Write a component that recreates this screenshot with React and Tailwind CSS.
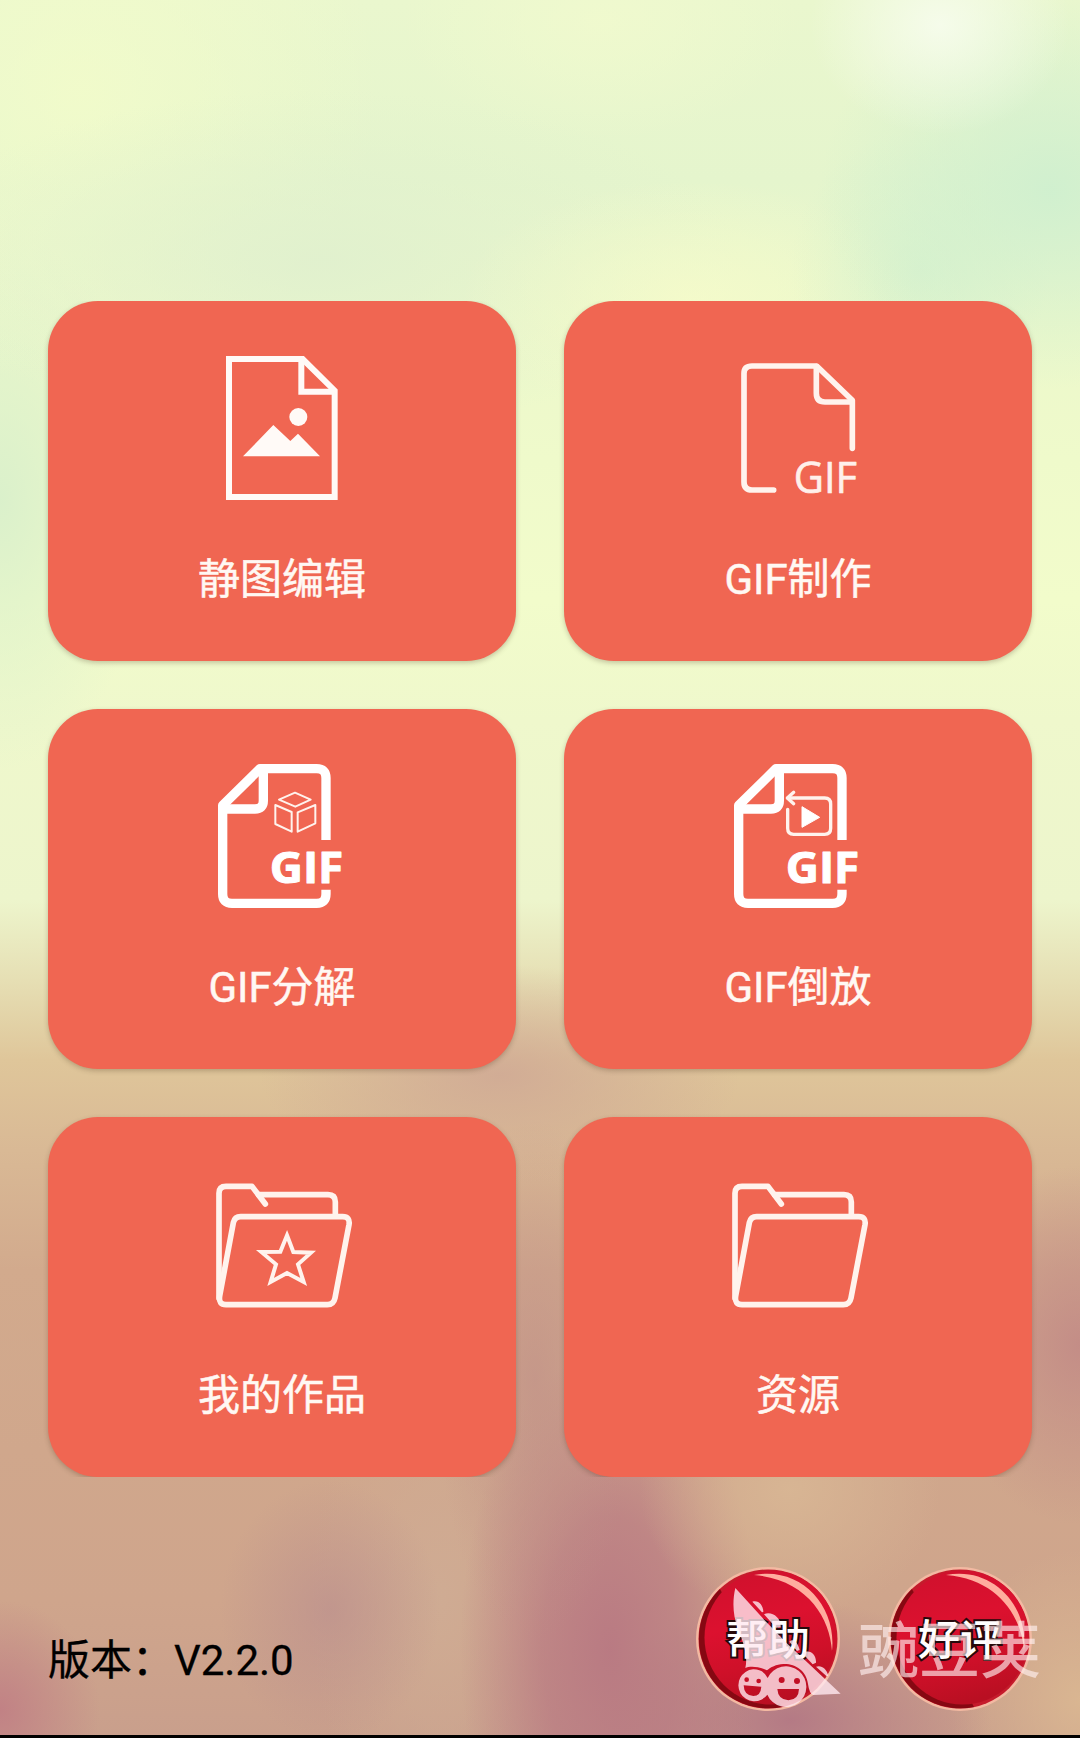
const gifFont = '"Open Sans", "Noto Sans", sans-serif';

function IconFrame({ viewBox, children }) {
  return (
    <svg className="block size-[160px] shrink-0" viewBox={viewBox} fill="none" stroke="#fff3ed" strokeLinejoin="round">
      {children}
    </svg>
  );
}

function PictureFileIcon() {
  return (
    <IconFrame viewBox="66 60 480 480">
      <g stroke="#fffaf7" strokeWidth="18" strokeLinejoin="miter">
        <path d="M147 87H368L464 182V501H147Z" />
        <path d="M364 88V185H464" />
      </g>
      <circle cx="355" cy="261" r="27" fill="#fffaf7" stroke="none" />
      <path d="M189 379L280 285L331 333L354 311L420 379Z" fill="#fffaf7" stroke="none" />
    </IconFrame>
  );
}

function GifFileIcon() {
  return (
    <IconFrame viewBox="54 60 480 480">
      <g strokeWidth="17" strokeLinecap="round">
        <path d="M221 480H156Q132 480 132 456V130Q132 108 156 108H350L457 211V355" />
        <path d="M349 110V190Q349 216 375 216H455" />
      </g>
      <text x="281" y="488" fill="#fff0eb" stroke="#fff0eb" strokeWidth="2" fontSize="132" textLength="190" lengthAdjust="spacingAndGlyphs" style={{ fontFamily: gifFont }}>
        GIF
      </text>
    </IconFrame>
  );
}

function BoldGifPage({ children, viewBox, shift }) {
  return (
    <IconFrame viewBox={viewBox}>
      <g transform={shift} stroke="#ffffff">
        <g strokeWidth="28">
          <path d="M438 300V114Q438 86 410 86H240L128 196V462Q128 490 156 490H410Q438 490 438 462V449" />
          <path d="M250 90V182Q250 207 225 207H130" />
        </g>
        <text x="269" y="428" fill="#ffffff" stroke="#ffffff" strokeWidth="3" fontSize="131" fontWeight="700" textLength="221" lengthAdjust="spacingAndGlyphs" style={{ fontFamily: gifFont }}>
          GIF
        </text>
      </g>
      {children}
    </IconFrame>
  );
}

function GifSplitIcon() {
  return (
    <BoldGifPage viewBox="66 54 480 480">
      <g strokeWidth="6">
        <path d="M345 158L392 179L346 200L297 179Z" />
        <path d="M286 195L335 216V275L286 252Z" />
        <path d="M406 195L353 217V275L406 250Z" />
      </g>
    </BoldGifPage>
  );
}

function GifReverseIcon() {
  return (
    <BoldGifPage viewBox="54 54 480 480" shift="translate(-12 0)">
      <g strokeWidth="10" strokeLinecap="round">
        <path d="M263 208V265Q263 283 281 283H374Q392 283 392 265V192Q392 174 374 174H264" />
        <path d="M281 157L262 174L281 191" />
      </g>
      <path d="M306 200V262L359 232Z" fill="#ffffff" stroke="#ffffff" strokeWidth="3" />
    </BoldGifPage>
  );
}

function FolderShape({ shift }) {
  return (
    <g transform={shift} strokeWidth="17" strokeLinecap="round">
      <path d="M117 445V130Q117 109 138 109H216L256 162" />
      <path d="M236 134H444Q466 134 466 156V196" />
      <path d="M182 200H488Q511 200 507 224L465 444Q461 464 442 464H138Q115 464 119 438L160 218Q164 200 182 200Z" />
    </g>
  );
}

function WorksFolderIcon() {
  return (
    <IconFrame viewBox="66 48 480 480">
      <FolderShape />
      <path
        d="M321 256L340 306L393 308L354 343L371 396L321 369L272 396L288 343L244 306L301 305Z"
        strokeWidth="12"
        strokeLinejoin="miter"
      />
    </IconFrame>
  );
}

function FolderIcon() {
  return (
    <IconFrame viewBox="54 48 480 480">
      <FolderShape shift="translate(-12 0)" />
    </IconFrame>
  );
}

const tiles = [
  { label: '静图编辑', Icon: PictureFileIcon },
  { label: 'GIF制作', Icon: GifFileIcon },
  { label: 'GIF分解', Icon: GifSplitIcon },
  { label: 'GIF倒放', Icon: GifReverseIcon },
  { label: '我的作品', Icon: WorksFolderIcon },
  { label: '资源', Icon: FolderIcon },
];

function Tile({ label, Icon }) {
  return (
    <button className="flex h-[360px] flex-col items-center rounded-[50px] bg-[#f06652] pt-[49px] shadow-[0_2px_5px_rgba(60,40,20,0.25)]">
      <Icon />
      <span className="mt-10 text-[42px] leading-[60px] text-[#fff8f3] [-webkit-text-stroke:0.5px_#fff8f3]">{label}</span>
    </button>
  );
}

function RoundButton({ label }) {
  return (
    <button className="relative flex size-[144px] items-center justify-center">
      <svg className="absolute inset-0 size-full" viewBox="0 0 144 144">
        <defs>
          <linearGradient id="redFace" x1="0.2" y1="0" x2="0.45" y2="1">
            <stop offset="0" stopColor="#cf112d" />
            <stop offset="0.4" stopColor="#dc112f" />
            <stop offset="0.7" stopColor="#cf1029" />
            <stop offset="1" stopColor="#b90f22" />
          </linearGradient>
        </defs>
        <circle cx="72" cy="72" r="72" fill="#f3b9a2" />
        <circle cx="72" cy="72" r="69.5" fill="#c51b2c" />
        <path d="M24 22A69.500 69.500 0 0 0 86 140Z" fill="#860812" />
        <ellipse cx="74.500" cy="70.500" rx="66" ry="67" fill="url(#redFace)" />
        <path d="M58 8C104 -1 141 38 136 84C134 50 110 12 58 8Z" fill="#ffad9e" />
      </svg>
      <span className="relative top-[2px] text-[42px] leading-none font-medium text-white [-webkit-text-stroke:4px_#27090b] [paint-order:stroke_fill]">
        {label}
      </span>
    </button>
  );
}

function PeaMascot() {
  return (
    <svg className="absolute top-[1585px] left-[730px] h-[126px] w-[112px]" viewBox="180 135 336 378">
      <g fill="#ffe9f0" fillOpacity="0.8">
        <path d="M196 144L284 241L352 311L418 373L512 461L430 465Q418 462 414 432C410 392 374 370 340 372C318 373 302 382 291 391C267 378 236 378 226 384C235 344 218 303 204 266C188 226 187 183 196 144Z" />
        <path d="M247 185C264 179 280 194 280 216L276 217ZM282 223C304 212 335 233 332 262L318 263ZM358 305C370 294 383 306 389 330L381 333ZM397 340C418 326 439 341 438 368L428 373ZM438 380C454 374 470 386 475 407L470 409Z" />
        <path fillRule="evenodd" d="M249 388A48 48 0 0 1 293 414A61 61 0 1 1 292 464A48 48 0 1 1 249 388ZM230 412A7 7 0 1 0 230 426A7 7 0 1 0 230 412ZM266 416A7 7 0 1 0 266 430A7 7 0 1 0 266 416ZM221 436Q222 467 250 468Q272 468 274 440ZM335 411A9 9 0 1 0 335 429A9 9 0 1 0 335 411ZM381 414A9 9 0 1 0 381 432A9 9 0 1 0 381 414ZM322 447Q324 479 355 481Q386 480 387 447Z" />
      </g>
    </svg>
  );
}

const backdrop = [
  'radial-gradient(ellipse 130px 110px at 940px 25px, rgba(246,252,236,0.95), rgba(242,248,230,0) 100%)',
  'radial-gradient(ellipse 230px 200px at 1050px 190px, rgba(206,239,207,0.9), rgba(206,239,207,0) 100%)',
  'radial-gradient(ellipse 130px 140px at 920px 270px, rgba(210,240,206,0.7), rgba(210,240,206,0) 100%)',
  'radial-gradient(ellipse 230px 120px at 690px 300px, rgba(246,251,202,0.8), rgba(246,251,202,0) 100%)',
  'radial-gradient(ellipse 420px 170px at 320px 260px, rgba(224,240,206,0.9), rgba(224,240,206,0) 100%)',
  'radial-gradient(ellipse 300px 300px at 80px 90px, rgba(243,252,202,0.8), rgba(243,252,202,0) 100%)',
  'radial-gradient(ellipse 200px 120px at 600px 20px, rgba(241,250,206,0.8), rgba(241,250,206,0) 100%)',
  'radial-gradient(ellipse 150px 270px at 0px 500px, rgba(216,239,203,0.9), rgba(216,239,203,0) 100%)',
  'radial-gradient(ellipse 240px 110px at 500px 1075px, rgba(206,166,148,0.8), rgba(206,166,148,0) 100%)',
  'radial-gradient(ellipse 140px 180px at 1080px 1345px, rgba(194,138,134,0.9), rgba(194,138,134,0) 100%)',
  'radial-gradient(ellipse 100px 260px at 535px 1380px, rgba(192,144,136,0.7), rgba(192,144,136,0) 100%)',
  'radial-gradient(ellipse 150px 130px at 790px 1490px, rgba(216,182,148,0.95), rgba(216,182,148,0) 100%)',
  'radial-gradient(ellipse 150px 300px at 610px 1650px, rgba(184,120,130,0.95), rgba(184,120,130,0.7) 45%, rgba(184,120,130,0) 100%)',
  'radial-gradient(ellipse 110px 130px at 330px 1610px, rgba(184,140,142,0.6), rgba(184,140,142,0) 100%)',
  'radial-gradient(ellipse 130px 260px at 440px 1600px, rgba(207,172,148,0.9), rgba(207,172,148,0) 100%)',
  'radial-gradient(ellipse 100px 110px at 0px 1710px, rgba(192,126,132,0.9), rgba(192,126,132,0) 100%)',
  'radial-gradient(ellipse 200px 120px at 790px 1720px, rgba(178,118,132,0.9), rgba(178,118,132,0) 100%)',
  'radial-gradient(ellipse 130px 150px at 1080px 1700px, rgba(219,184,146,0.9), rgba(219,184,146,0) 100%)',
  'linear-gradient(180deg, #eaf7ce 0px, #e5f5cd 180px, #ecf8cb 320px, #f2fccb 600px, #eff8cc 720px, #edf5cc 900px, #e6dfb4 980px, #dfc69a 1060px, #d9b995 1150px, #d2aa8d 1270px, #d0a78c 1450px, #cfa58c 1600px, #c99f8c 1738px)',
].join(', ');

export default function App() {
  return (
    <main
      className="relative flex h-[1738px] w-[1080px] flex-col overflow-hidden border-b-[3px] border-black pt-[301px] [font-family:Roboto,'Noto_Sans_CJK_SC',sans-serif]"
      style={{ backgroundImage: backdrop }}
    >
      <section className="grid grid-cols-2 gap-12 overflow-hidden px-12">
        {tiles.map((tile) => (
          <Tile key={tile.label} {...tile} />
        ))}
      </section>

      <footer className="mt-[90px] flex items-start justify-between px-12">
        <p className="mt-[64px] text-[42px] leading-[60px] text-black [-webkit-text-stroke:0.3px_black]">版本：V2.2.0</p>
        <div className="flex gap-12">
          <RoundButton label="帮助" />
          <RoundButton label="好评" />
        </div>
      </footer>

      <PeaMascot />
      <span className="absolute top-[1622px] left-[858px] text-[61px] leading-[60px] font-medium whitespace-nowrap text-[#fff0f0]/65">
        豌豆荚
      </span>
    </main>
  );
}
